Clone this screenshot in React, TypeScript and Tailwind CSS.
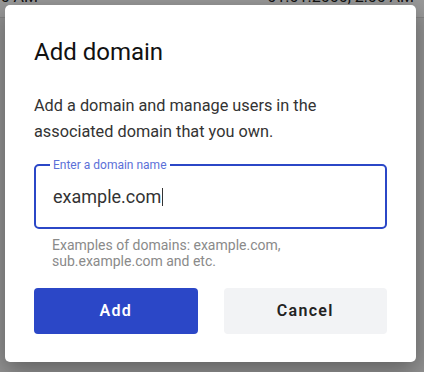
import React from 'react';

const font = { fontFamily: 'Roboto, "Liberation Sans", sans-serif' };

function BackgroundPage() {
  return (
    <div className="flex flex-col h-full bg-white">
      <div className="flex justify-between items-end h-[33px] -mt-[15px] pb-[8px] pr-[10px] text-[16px] text-[#222] border-b border-[#ddd]">
        <div className="w-[38px] overflow-hidden flex justify-end whitespace-nowrap">
          <span>01.01.2000, 2:00 AM</span>
        </div>
        <span className="whitespace-nowrap">01.01.2000, 2:00 AM</span>
      </div>
      <div className="flex-1 bg-[#f4f4f4]" />
    </div>
  );
}

function AddDomainDialog() {
  return (
    <div className="w-[411px] bg-white rounded-[5px] shadow-[0_8px_24px_rgba(0,0,0,0.35)] px-[29px] pt-[33px] pb-[28px] flex flex-col">
      <h2 className="text-[24px] leading-[28px] text-[#111] font-normal">Add domain</h2>
      <p className="mt-[27px] text-[16.3px] leading-[26px] text-[#333] pr-[20px]">
        Add a domain and manage users in the associated domain that you own.
      </p>

      <div className="relative mt-[19px] h-[65px] border-2 border-[#2b47c7] rounded-[5px] flex items-center pl-[17px]">
        <span className="absolute -top-[9px] left-[14px] bg-white px-[3px] text-[12px] leading-[16px] text-[#5b70d8]">
          Enter a domain name
        </span>
        <span className="text-[18px] leading-[24px] text-[#333]">example.com</span>
        <span className="ml-[1px] w-px h-[18px] bg-[#333]" />
      </div>
      <p className="mt-[8px] pl-[18px] pr-[60px] text-[14px] leading-[16px] text-[#8a8a8a]">
        Examples of domains: example.com, sub.example.com and etc.
      </p>

      <div className="mt-[19px] grid grid-cols-2 gap-[26px]">
        <button className="h-[46px] rounded-[4px] bg-[#2b47c7] text-white text-[16px] font-semibold tracking-[1.3px]">
          Add
        </button>
        <button className="h-[46px] rounded-[4px] bg-[#f2f3f5] text-[#222] text-[16px] font-semibold tracking-[1.3px]">
          Cancel
        </button>
      </div>
    </div>
  );
}

export default function App() {
  return (
    <div className="relative w-[424px] h-[372px] overflow-hidden" style={font}>
      <BackgroundPage />
      <div className="absolute inset-0 bg-black/40 pt-[5px] pl-[5px]">
        <AddDomainDialog />
      </div>
    </div>
  );
}
